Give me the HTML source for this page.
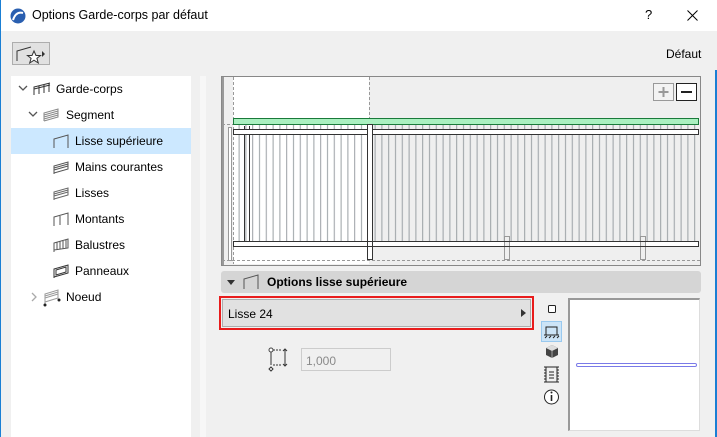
<!DOCTYPE html>
<html><head><meta charset="utf-8">
<style>
*{margin:0;padding:0;box-sizing:border-box}
html,body{width:717px;height:437px;overflow:hidden}
body{background:#f0f0f0;font-family:"Liberation Sans",sans-serif;font-size:12px;color:#000;position:relative}
.abs{position:absolute}
.title{left:0;top:0;width:717px;height:31px;background:#fff;border-left:1px solid #1a7fd4}
.tree{left:11px;top:76px;width:180px;height:361px;background:#fff}
.row{position:absolute;left:0;width:180px;height:26px;line-height:26px}
.row span{position:absolute}
</style></head><body>
<div class="abs title">
  <svg class="abs" style="left:9px;top:8px" width="16" height="16" viewBox="0 0 16 16"><circle cx="8" cy="8" r="7.5" fill="#2a5fb0"/><path d="M3 12 Q6 3 13 5" stroke="#fff" stroke-width="2" fill="none"/></svg>
  <div class="abs" style="left:31px;top:8px;font-size:12.5px;color:#000">Options Garde-corps par défaut</div>
  <div class="abs" style="left:644px;top:7px;font-size:13px">?</div>
  <svg class="abs" style="left:686px;top:10px" width="11" height="11"><path d="M0.5 0.5L10.5 10.5M10.5 0.5L0.5 10.5" stroke="#000" stroke-width="1"/></svg>
</div>
<div class="abs" style="left:0;top:31px;width:1px;height:406px;background:#1a7fd4"></div>
<div class="abs" style="left:715px;top:70px;width:2px;height:367px;background:#1a7fd4"></div>

<div class="abs" style="left:12px;top:42px;width:38px;height:23px;background:#e1e1e1;border:1px solid #adadad">
  <svg width="38" height="23"><path d="M4 18V8L18 4" stroke="#333" fill="none"/><path d="M21 8l2 4.5h4.5l-3.6 2.8 1.4 4.7-4.3-2.8-4.3 2.8 1.4-4.7-3.6-2.8h4.5z" stroke="#333" fill="#fff"/><path d="M29 8l3 3-3 3z" fill="#333"/></svg>
</div>
<div class="abs" style="left:666px;top:47px;font-size:12px">Défaut</div>

<div class="abs tree">
  <div class="row" style="top:0"><svg class="abs" style="left:7px;top:9px" width="10" height="8"><path d="M1 1l4 4 4-4" stroke="#555" fill="none" stroke-width="1.3"/></svg>
    <svg class="abs" style="left:22px;top:6px" width="18" height="14"><path d="M1 13V5L17 1M6 12V4M11 11V3M16 10V1M1 7L17 3" stroke="#333" fill="none"/></svg><span style="left:45px">Garde-corps</span></div>
  <div class="row" style="top:26px"><svg class="abs" style="left:17px;top:9px" width="10" height="8"><path d="M1 1l4 4 4-4" stroke="#555" fill="none" stroke-width="1.3"/></svg>
    <svg class="abs" style="left:32px;top:6px" width="16" height="14"><path d="M1 13V5L15 1V9L1 13M1 7L15 3M1 9L15 5M1 11L15 7" stroke="#888" fill="none"/></svg><span style="left:55px">Segment</span></div>
  <div class="row" style="top:52px;background:#cce8ff"><svg class="abs" style="left:42px;top:6px" width="16" height="14"><path d="M1 14V5L15 1V14" stroke="#555" fill="none"/></svg><span style="left:64px">Lisse supérieure</span></div>
  <div class="row" style="top:78px"><svg class="abs" style="left:42px;top:6px" width="16" height="14"><path d="M1 14V6L15 2V9L1 13M1 8L15 4M1 10L15 6" stroke="#555" fill="none"/></svg><span style="left:64px">Mains courantes</span></div>
  <div class="row" style="top:104px"><svg class="abs" style="left:42px;top:6px" width="16" height="14"><path d="M1 14V6L15 2V9L1 13M1 8L15 4M1 10L15 6" stroke="#666" fill="none"/></svg><span style="left:64px">Lisses</span></div>
  <div class="row" style="top:130px"><svg class="abs" style="left:42px;top:6px" width="16" height="14"><path d="M1 14V5L15 1V13M7 13V4" stroke="#555" fill="none"/></svg><span style="left:64px">Montants</span></div>
  <div class="row" style="top:156px"><svg class="abs" style="left:42px;top:6px" width="16" height="14"><path d="M1 14V5L15 1V10L1 12M4 12V4M7 11V3M10 11V3M13 10V2" stroke="#555" fill="none"/></svg><span style="left:64px">Balustres</span></div>
  <div class="row" style="top:182px"><svg class="abs" style="left:42px;top:6px" width="16" height="14"><path d="M1 14V5L15 1V9L1 13M3 11V6L13 3V8Z" stroke="#333" fill="none"/></svg><span style="left:64px">Panneaux</span></div>
  <div class="row" style="top:208px"><svg class="abs" style="left:20px;top:8px" width="8" height="10"><path d="M1 1l4 4-4 4" stroke="#aaa" fill="none" stroke-width="1.3"/></svg>
    <svg class="abs" style="left:32px;top:5px" width="18" height="18"><path d="M2 15V5L15 1V9L2 13M2 7L15 3M2 9L15 5" stroke="#999" fill="none"/><circle cx="2" cy="16" r="1.5" fill="#222"/><circle cx="16" cy="11" r="1.5" fill="#222"/></svg><span style="left:55px">Noeud</span></div>
</div>

<div class="abs" style="left:200px;top:76px;width:6px;height:361px;background:#f7f7f7"></div>

<!-- preview -->
<svg class="abs" style="left:221px;top:76px" width="480" height="190">
  <defs><pattern id="bal" x="0" y="0" width="6.8" height="200" patternUnits="userSpaceOnUse"><rect x="4" y="0" width="1" height="200" fill="#9aa0a4"/></pattern></defs>
  <rect x="0.5" y="0.5" width="479" height="189" fill="#efefef" stroke="#888"/>
  <rect x="1" y="1" width="2" height="188" fill="#999"/>
  <rect x="12" y="1" width="136" height="187" fill="#fff"/>
  <line x1="12.5" y1="1" x2="12.5" y2="188" stroke="#999" stroke-dasharray="3,2"/>
  <line x1="148.5" y1="1" x2="148.5" y2="48" stroke="#999" stroke-dasharray="3,2"/>
  <line x1="1" y1="48.5" x2="12" y2="48.5" stroke="#999" stroke-dasharray="3,2"/>
  <line x1="1" y1="184.5" x2="479" y2="184.5" stroke="#999" stroke-dasharray="3,2"/>
  <rect x="12" y="48" width="466" height="119" fill="url(#bal)"/>
  <rect x="23" y="50" width="1" height="118" fill="#333"/>
  <rect x="28" y="50" width="1" height="118" fill="#333"/>
  <rect x="7.5" y="51.5" width="3" height="133" fill="#fff" stroke="#999"/>
  <rect x="12.5" y="42.5" width="465" height="6" fill="#aaf0c0" stroke="#1a7a3a"/>
  <rect x="12.5" y="53.5" width="465" height="5" fill="#fff" stroke="#333"/>
  <rect x="12.5" y="165.5" width="465" height="5" fill="#fff" stroke="#333"/>
  <rect x="146.5" y="48.5" width="5" height="135" fill="#fff" stroke="#333"/>
  <rect x="283.5" y="160.5" width="5" height="23" fill="#efefef" stroke="#999"/>
  <rect x="419.5" y="160.5" width="5" height="23" fill="#efefef" stroke="#999"/>
  <rect x="12.5" y="165.5" width="465" height="5" fill="none" stroke="#333"/>
  <rect x="432.5" y="7.5" width="20" height="17" fill="#f3f3f3" stroke="#999"/>
  <path d="M442.5 11v10M437.5 16h10" stroke="#999" stroke-width="2"/>
  <rect x="455.5" y="7.5" width="20" height="17" fill="#fff" stroke="#222"/>
  <path d="M460 16h11" stroke="#222" stroke-width="2"/>
</svg>

<!-- options header -->
<div class="abs" style="left:221px;top:271px;width:480px;height:22px;background:#d5d5d5;border-radius:3px">
  <svg class="abs" style="left:6px;top:9px" width="8" height="5"><path d="M0 0h8L4 5z" fill="#333"/></svg>
  <svg class="abs" style="left:22px;top:3px" width="16" height="16"><path d="M1 15V5L15 1V15" stroke="#555" fill="none"/></svg>
  <div class="abs" style="left:46px;top:4px;font-weight:bold;font-size:12px">Options lisse supérieure</div>
</div>

<div class="abs" style="left:219px;top:296px;width:315px;height:34px;border:2px solid #e81c1c;padding:1px">
  <div style="width:100%;height:100%;background:#e1e1e1;border:1px solid #adadad;position:relative">
    <div class="abs" style="left:5px;top:7px">Lisse 24</div>
    <svg class="abs" style="right:4px;top:9px" width="5" height="8"><path d="M0 0l5 4-5 4z" fill="#333"/></svg>
  </div>
</div>

<!-- height field -->
<svg class="abs" style="left:268px;top:347px" width="22" height="26"><circle cx="3" cy="3" r="2" fill="#fff" stroke="#444"/><path d="M3 5V18" stroke="#333"/><path d="M5 3h9M5 18h9" stroke="#333" stroke-dasharray="2,1"/><path d="M17 2V19M15 4l2-2 2 2M15 17l2 2 2-2" stroke="#333" fill="none"/><path d="M3 20l2 2-2 2-2-2z" fill="#fff" stroke="#333"/></svg>
<div class="abs" style="left:301px;top:348px;width:90px;height:23px;background:#f0f0f0;border:1px solid #ccc;color:#8a8a8a;padding:5px 4px;font-size:12px">1,000</div>

<!-- view icons -->
<svg class="abs" style="left:541px;top:298px" width="22" height="110">
  <rect x="7.5" y="7.5" width="7" height="7" fill="#fff" stroke="#222" rx="1"/>
  <rect x="0.5" y="23.5" width="20" height="20" fill="#cce4f7" stroke="#99c9ef"/>
  <path d="M5 37V29h11V37M3 37h15" stroke="#222" fill="none"/><path d="M4 40l2-2M8 40l2-2M12 40l2-2M16 40l2-2" stroke="#222"/>
  <path d="M11 47l6 3v7l-6 3-6-3v-7z" fill="#444"/><path d="M5 50l6 3 6-3-6-3z" fill="#ddd"/><path d="M11 53v7" stroke="#fff" stroke-width="0.5"/>
  <path d="M3 69h15M3 84h15M5 69v15M16 69v15M3 72h2M3 75h2M3 78h2M3 81h2M16 72h2M16 75h2M16 78h2M16 81h2M8 74h5M8 77h5M8 80h5" stroke="#222"/>
  <circle cx="10.5" cy="99" r="7" fill="#fff" stroke="#222"/><path d="M10.5 97v6" stroke="#222" stroke-width="1.6"/><circle cx="10.5" cy="94.5" r="1" fill="#222"/>
</svg>

<div class="abs" style="left:568px;top:298px;width:132px;height:133px;background:#fff;border-top:2px solid #999;border-left:2px solid #999;border-right:1px solid #ddd;border-bottom:1px solid #ddd">
  <div class="abs" style="left:6px;top:63px;width:121px;height:4px;border:1px solid #7a7ae8;border-radius:2px"></div>
</div>
</body></html>
